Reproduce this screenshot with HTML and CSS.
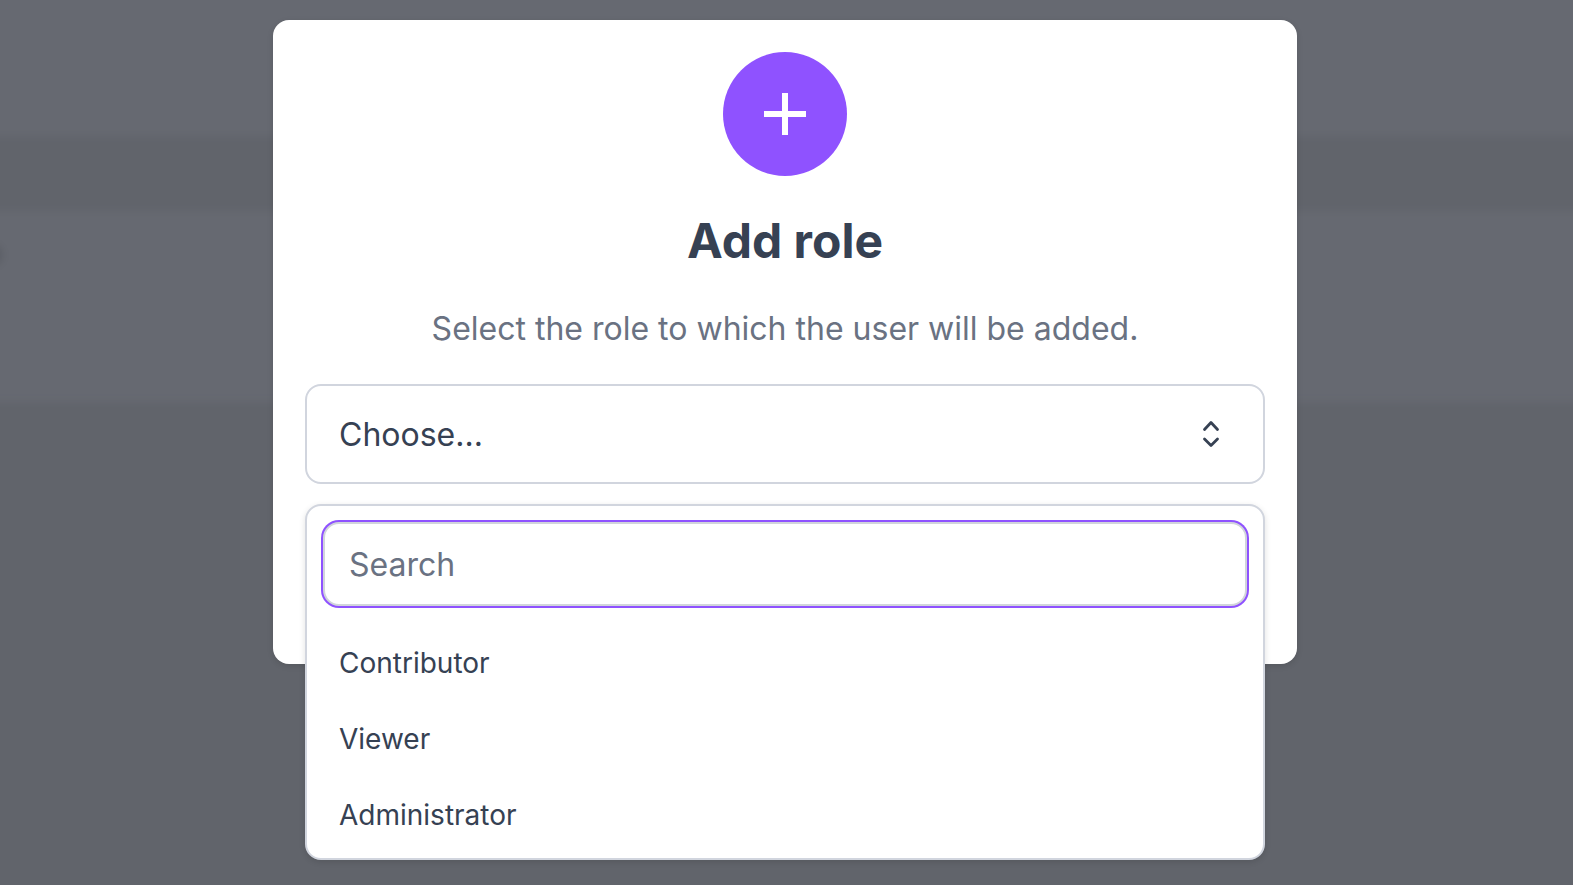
FILE: index.html
```html
<!DOCTYPE html>
<html lang="en">
<head>
<meta charset="utf-8">
<meta name="viewport" content="width=device-width, initial-scale=1">
<title>Add role</title>
<link rel="stylesheet" href="styles.css">
</head>
<body>
<div class="page" aria-hidden="true">
  <div class="band band-header"></div>
  <div class="band band-gap"></div>
  <div class="band band-content"><span class="speck"></span></div>
</div>
<div class="backdrop">
  <main class="dialog" role="dialog" aria-modal="true" aria-labelledby="dialog-title">
    <div class="badge">
      <svg class="badge-icon" viewBox="0 0 42 42" aria-hidden="true"><path d="M21 0v42M0 21h42" stroke="currentColor" stroke-width="6"/></svg>
    </div>
    <h1 class="title" id="dialog-title">Add role</h1>
    <p class="description">Select the role to which the user will be added.</p>
    <div class="picker">
      <button class="trigger" type="button" aria-haspopup="listbox" aria-expanded="true">
        <span>Choose...</span>
        <svg class="chevrons" viewBox="0 0 40 40" aria-hidden="true"><path d="M13.5 15.5l6.5-7 6.5 7M13.5 25l6.5 6.5 6.5-6.5" fill="none" stroke="currentColor" stroke-width="2.8" stroke-linecap="round" stroke-linejoin="round"/></svg>
      </button>
      <div class="menu">
        <input class="search" type="text" placeholder="Search" aria-label="Search">
        <div class="options" role="listbox" aria-label="Roles">
          <button class="option" type="button" role="option">Contributor</button>
          <button class="option" type="button" role="option">Viewer</button>
          <button class="option" type="button" role="option">Administrator</button>
        </div>
      </div>
    </div>
  </main>
</div>
</body>
</html>
```
FILE: styles.css
```css
* {
  box-sizing: border-box;
}

body {
  margin: 0;
  min-height: 100vh;
  background: #61646b;
  color: #364153;
  font-family: Inter, "Liberation Sans", sans-serif;
  font-optical-sizing: none;
  overflow: hidden;
}

.page {
  position: absolute;
  inset: 0 -20px;
  filter: blur(4px);
}

.band {
  background: #666971;
}

.band-header {
  height: 136px;
  box-shadow: 0 -20px #666971;
}

.band-gap {
  height: 75px;
  background: #61646b;
}

.band-content {
  height: 192px;
  display: flex;
}

.speck {
  width: 22px;
  height: 20px;
  margin-top: 34px;
  border-radius: 8px;
  background: #5a5d64;
}

.backdrop {
  position: relative;
  display: flex;
  justify-content: center;
  padding: 20px 19px 20px 16px;
}

.dialog {
  display: flex;
  flex-direction: column;
  align-items: center;
  width: 100%;
  max-width: 1024px;
  min-height: 644px;
  padding: 32px;
  border-radius: 16px;
  background: #fff;
  box-shadow: 0 2px 6px rgba(0, 0, 0, 0.12);
}

.badge {
  display: flex;
  align-items: center;
  justify-content: center;
  width: 124px;
  height: 124px;
  border-radius: 50%;
  background: #8f52ff;
  color: #fff;
}

.badge-icon {
  width: 42px;
  height: 42px;
}

.title {
  margin: 32px 0 0;
  font-size: 48px;
  line-height: 66px;
  font-weight: 700;
}

.description {
  margin: 31px 0;
  font-size: 32px;
  line-height: 48px;
  color: #6a7282;
  text-align: center;
}

.picker {
  position: relative;
  width: 100%;
}

.trigger {
  display: flex;
  align-items: center;
  justify-content: space-between;
  width: 100%;
  height: 100px;
  padding: 0 32px;
  border: 2px solid #d1d5de;
  border-radius: 16px;
  background: #fff;
  color: inherit;
  font: inherit;
  font-size: 32px;
}

.chevrons {
  width: 40px;
  height: 40px;
}

.menu {
  position: absolute;
  top: 120px;
  left: 0;
  right: 0;
  padding: 16px 16px 5px;
  border: 2px solid #d1d5de;
  border-radius: 16px;
  background: #fff;
  box-shadow: 0 2px 6px rgba(0, 0, 0, 0.12);
}

.search {
  display: block;
  width: 100%;
  height: 84px;
  padding: 0 24px;
  border: 2px solid #d1d5db;
  border-radius: 16px;
  outline: none;
  box-shadow: 0 0 0 2px #8f52ff;
  background: #fff;
  color: inherit;
  font: inherit;
  font-size: 32px;
}

.search::placeholder {
  color: #6a7282;
  opacity: 1;
}

.options {
  display: flex;
  flex-direction: column;
  margin-top: 19px;
}

.option {
  height: 76px;
  padding: 0 16px;
  border: 0;
  background: none;
  color: inherit;
  font: inherit;
  font-size: 28px;
  text-align: left;
}
```
